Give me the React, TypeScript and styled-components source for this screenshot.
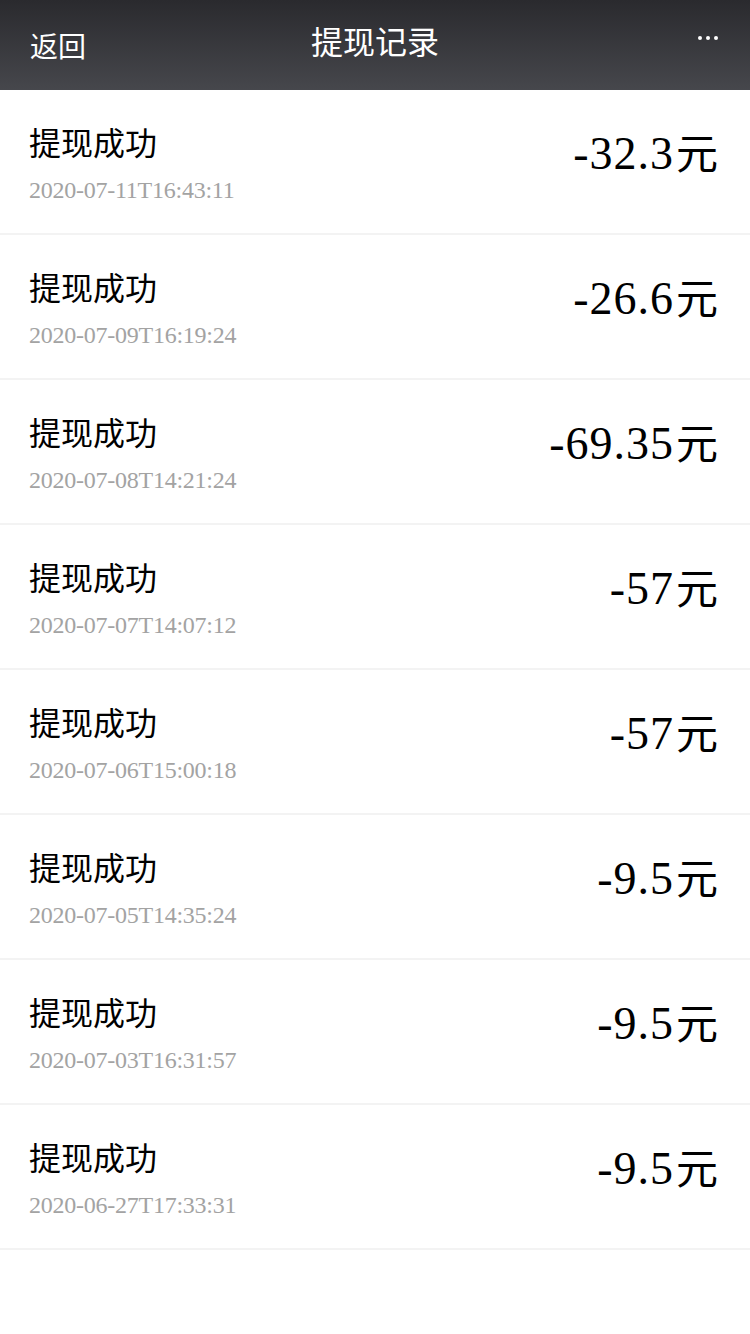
import React from "react";
import styled, { createGlobalStyle } from "styled-components";

const GlobalStyle = createGlobalStyle`
  html, body {
    margin: 0;
    padding: 0;
    background: #ffffff;
  }
  body {
    font-family: "Noto Sans CJK SC", "Noto Sans", sans-serif;
  }
`;

const Page = styled.div`
  width: 750px;
  min-height: 1334px;
  background: #ffffff;
`;

const NavBar = styled.header`
  position: relative;
  height: 90px;
  display: flex;
  align-items: center;
  justify-content: space-between;
  padding: 0 32px 0 30px;
  box-sizing: border-box;
  background: linear-gradient(to bottom, #2a2a2e 0%, #46474c 100%);
  color: #ffffff;
`;

const BackButton = styled.span`
  font-size: 28px;
  line-height: 1;
`;

const Title = styled.h1`
  position: absolute;
  left: 0;
  right: 0;
  top: 0;
  height: 80px;
  margin: 0;
  display: flex;
  align-items: center;
  justify-content: center;
  font-size: 32px;
  font-weight: 400;
  pointer-events: none;
`;

const More = styled.span`
  display: flex;
  gap: 4px;
  margin-top: -14px;
`;

const Dot = styled.i`
  width: 4px;
  height: 4px;
  border-radius: 50%;
  background: #ffffff;
`;

const List = styled.ul`
  list-style: none;
  margin: 0;
  padding: 0;
`;

const Row = styled.li`
  height: 143px;
  display: flex;
  align-items: center;
  justify-content: space-between;
  padding: 0 32px 0 29px;
  border-bottom: 2px solid #f3f3f3;
`;

const Info = styled.div`
  display: flex;
  flex-direction: column;
  gap: 21px;
  margin-top: 4px;
`;

const Status = styled.span`
  font-size: 32px;
  line-height: 32px;
  color: #000000;
`;

const Time = styled.span`
  font-family: "Liberation Serif", "Times New Roman", serif;
  font-size: 24px;
  line-height: 24px;
  color: #a3a3a3;
  letter-spacing: -0.25px;
`;

const Amount = styled.span`
  font-family: "Liberation Serif", "Times New Roman", serif;
  font-size: 46px;
  line-height: 46px;
  letter-spacing: 1px;
  color: #000000;
  margin-bottom: 16px;
  display: flex;
  align-items: baseline;
`;

const Unit = styled.span`
  font-family: "Noto Sans CJK SC", sans-serif;
  font-size: 42px;
  line-height: 42px;
  letter-spacing: 0;
  margin-left: 2px;
`;

const records = [
  { time: "2020-07-11T16:43:11", amount: "-32.3" },
  { time: "2020-07-09T16:19:24", amount: "-26.6" },
  { time: "2020-07-08T14:21:24", amount: "-69.35" },
  { time: "2020-07-07T14:07:12", amount: "-57" },
  { time: "2020-07-06T15:00:18", amount: "-57" },
  { time: "2020-07-05T14:35:24", amount: "-9.5" },
  { time: "2020-07-03T16:31:57", amount: "-9.5" },
  { time: "2020-06-27T17:33:31", amount: "-9.5" },
];

export default function App() {
  return (
    <Page>
      <GlobalStyle />
      <NavBar>
        <BackButton>返回</BackButton>
        <Title>提现记录</Title>
        <More>
          <Dot />
          <Dot />
          <Dot />
        </More>
      </NavBar>
      <List>
        {records.map((r, i) => (
          <Row key={i}>
            <Info>
              <Status>提现成功</Status>
              <Time>{r.time}</Time>
            </Info>
            <Amount>
              {r.amount}
              <Unit>元</Unit>
            </Amount>
          </Row>
        ))}
      </List>
    </Page>
  );
}
